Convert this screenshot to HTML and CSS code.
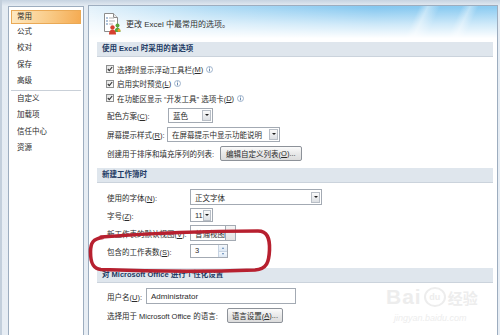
FILE: index.html
```html
<!DOCTYPE html>
<html lang="zh-CN">
<head>
  <meta charset="UTF-8">
  <meta name="viewport" content="width=device-width, initial-scale=1.0">
  <title>Excel 选项</title>
  <link rel="stylesheet" href="styles.css">
</head>
<body>
<div class="window">

  <!-- 左侧导航 -->
  <ul class="nav">
    <li class="nav-item active">常用</li>
    <li class="nav-item">公式</li>
    <li class="nav-item">校对</li>
    <li class="nav-item">保存</li>
    <li class="nav-item">高级</li>
    <li class="nav-sep"></li>
    <li class="nav-item">自定义</li>
    <li class="nav-item">加载项</li>
    <li class="nav-item">信任中心</li>
    <li class="nav-item">资源</li>
  </ul>

  <!-- 右侧内容 -->
  <div class="panel">
    <div class="banner">
      <svg class="banner-icon" width="20" height="23" viewBox="0 0 20 23">
        <path d="M2.5 1.5h9l4 4v14h-13z" fill="#fff" stroke="#8c8c8c"/>
        <path d="M11.5 1.5v4h4" fill="#ececec" stroke="#8c8c8c"/>
        <path d="M4 6h2M4 9h2M4 12h2" stroke="#5f86b6"/>
        <path d="M7 6h5M7 9h6M7 12h4" stroke="#b3b3b3"/>
        <circle cx="15.5" cy="13.5" r="2" fill="#5aa63a"/>
        <path d="M12.5 20c0-3 1.3-4.3 3-4.3s3 1.3 3 4.3z" fill="#5aa63a"/>
        <circle cx="10.5" cy="15.5" r="2.2" fill="#d6402e"/>
        <path d="M7 22.5c0-3.6 1.5-4.8 3.5-4.8s3.5 1.2 3.5 4.8z" fill="#d6402e"/>
        <circle cx="17" cy="18.5" r="1.4" fill="#f0a030"/>
      </svg>
      <span>更改 Excel 中最常用的选项。</span>
    </div>

    <div class="bar">使用 Excel 时采用的首选项</div>
    <div class="group prefs">
      <div class="row check-row">
        <span class="checkbox"><svg width="6" height="6" viewBox="0 0 6 6"><path d="M0.8 3l1.5 1.6L5.2 1" fill="none" stroke="#333" stroke-width="1.1"/></svg></span>
        选择时显示浮动工具栏(<u>M</u>)
        <svg class="info" width="7" height="7" viewBox="0 0 7 7"><circle cx="3.5" cy="3.5" r="3" fill="#fff" stroke="#8aa3c2" stroke-width="0.8"/><rect x="3.05" y="1.4" width="0.9" height="0.9" fill="#5c7fa8"/><rect x="3.05" y="2.8" width="0.9" height="2.6" fill="#5c7fa8"/></svg>
      </div>
      <div class="row check-row">
        <span class="checkbox"><svg width="6" height="6" viewBox="0 0 6 6"><path d="M0.8 3l1.5 1.6L5.2 1" fill="none" stroke="#333" stroke-width="1.1"/></svg></span>
        启用实时预览(<u>L</u>)
        <svg class="info" width="7" height="7" viewBox="0 0 7 7"><circle cx="3.5" cy="3.5" r="3" fill="#fff" stroke="#8aa3c2" stroke-width="0.8"/><rect x="3.05" y="1.4" width="0.9" height="0.9" fill="#5c7fa8"/><rect x="3.05" y="2.8" width="0.9" height="2.6" fill="#5c7fa8"/></svg>
      </div>
      <div class="row check-row">
        <span class="checkbox"><svg width="6" height="6" viewBox="0 0 6 6"><path d="M0.8 3l1.5 1.6L5.2 1" fill="none" stroke="#333" stroke-width="1.1"/></svg></span>
        在功能区显示 “开发工具” 选项卡(<u>D</u>)
        <svg class="info" width="7" height="7" viewBox="0 0 7 7"><circle cx="3.5" cy="3.5" r="3" fill="#fff" stroke="#8aa3c2" stroke-width="0.8"/><rect x="3.05" y="1.4" width="0.9" height="0.9" fill="#5c7fa8"/><rect x="3.05" y="2.8" width="0.9" height="2.6" fill="#5c7fa8"/></svg>
      </div>
      <div class="row">
        <span class="label label-s">配色方案(<u>C</u>):</span>
        <span class="select w-color"><span class="value">蓝色</span><span class="arrow"></span></span>
      </div>
      <div class="row">
        <span class="label label-s">屏幕提示样式(<u>R</u>):</span>
        <span class="select w-tip"><span class="value">在屏幕提示中显示功能说明</span><span class="arrow"></span></span>
      </div>
      <div class="row">
        <span>创建用于排序和填充序列的列表:</span>
        <span class="btn btn-list">编辑自定义列表(<u>O</u>)...</span>
      </div>
    </div>

    <div class="bar">新建工作簿时</div>
    <div class="group newbook">
      <div class="row">
        <span class="label label-m">使用的字体(<u>N</u>):</span>
        <span class="select w-font"><span class="value">正文字体</span><span class="arrow"></span></span>
      </div>
      <div class="row">
        <span class="label label-m">字号(<u>Z</u>):</span>
        <span class="select w-size"><span class="value">11</span><span class="arrow"></span></span>
      </div>
      <div class="row">
        <span class="label label-m">新工作表的默认视图(<u>V</u>):</span>
        <span class="select w-view"><span class="value">普通视图</span><span class="arrow blank"></span></span>
      </div>
      <div class="row">
        <span class="label label-m">包含的工作表数(<u>S</u>):</span>
        <span class="spin"><span class="value">3</span><span class="spinner"><span class="up"></span><span class="down"></span></span></span>
      </div>
    </div>

    <div class="bar">对 Microsoft Office 进行个性化设置</div>
    <div class="group personal">
      <div class="row">
        <span class="label label-u">用户名(<u>U</u>):</span>
        <span class="text-input">Administrator</span>
      </div>
      <div class="row">
        <span>选择用于 Microsoft Office 的语言:</span>
        <span class="btn btn-lang">语言设置(<u>A</u>)...</span>
      </div>
    </div>
  </div>

  <!-- 红色圈注 -->
  <svg class="mark" width="190" height="50" viewBox="85 226 190 50">
    <path d="M101 237 C140 234 200 231 258 231 C267 231 270 238 269.5 250 C269 262 267 269 255 270 C200 272 140 271 101 269.5 C93 269 90.5 263 90.5 252 C90.5 243 93 238.5 103 237.5" fill="none" stroke="#b7202f" stroke-width="3.6" stroke-linecap="round"/>
  </svg>

  <!-- 水印 -->
  <div class="watermark">
    <div class="wm-logo"><span class="wm-bai">Bai</span><span class="wm-du">du</span><span class="wm-jy">经验</span></div>
    <div class="wm-url">jingyan.baidu.com</div>
  </div>
</div>
</body>
</html>
```

FILE: styles.css
```css
body {
    margin: 0;
    font-family: "Liberation Sans", "Noto Sans CJK SC", sans-serif;
    font-size: 7.5px;
    color: #2b2b2b;
}

u {
    text-decoration: underline;
}

/* 窗口 */
.window {
    position: relative;
    display: flex;
    align-items: flex-start;
    width: 500px;
    height: 335px;
    overflow: hidden;
    background: linear-gradient(#c6d3e1, #e5ecf3 6px, #e7edf4);
    border-left: 2px solid #c3cfdc;
    box-sizing: border-box;
}

/* 左侧导航 */
.nav {
    list-style: none;
    margin: 6px 0 0 6px;
    padding: 0 2px;
    width: 76px;
    height: 329px;
    box-sizing: border-box;
    border: 1px solid #9dadbf;
    border-bottom: none;
    background: #fff;
}

.nav-item {
    height: 16.5px;
    line-height: 16.5px;
    padding-left: 6px;
    white-space: nowrap;
}

.nav-item.active {
    margin-top: 3px;
    height: 13.5px;
    line-height: 11.5px;
    padding-left: 5px;
    box-sizing: border-box;
    border: 1px solid #eaa955;
    background: linear-gradient(100deg, #fee9c2, #f9ca86 55%, #f5ab52);
}

.nav-sep {
    height: 1px;
    background: #c9d0d8;
}

/* 右侧内容 */
.panel {
    margin: 5px 0 0 4px;
    width: 410px;
    height: 330px;
    box-sizing: border-box;
    border: 1px solid #9dadbf;
    border-bottom: none;
    background: #fff;
}

.banner {
    display: flex;
    align-items: center;
    gap: 4px;
    height: 34px;
    padding-left: 13px;
    font-size: 8px;
    color: #333;
    background:
        linear-gradient(to bottom, rgba(255, 255, 255, 0) 5%, rgba(255, 255, 255, 0.6) 55%, #fff 95%),
        linear-gradient(115deg, transparent 78%, rgba(255, 255, 255, 0.45) 80%, transparent 83%, transparent 88%, rgba(255, 255, 255, 0.4) 90%, transparent 92%),
        linear-gradient(to right, #e4f2fb, #b2dcf5 30%, #86c8f0 70%, #8fcdf2);
}

.bar {
    margin: 2px 4px 0 8px;
    height: 15px;
    line-height: 14px;
    padding-left: 5px;
    box-sizing: border-box;
    background: #dfe6ed;
    border-bottom: 1px solid #cbd3dc;
    font-weight: bold;
    color: #1d3a63;
    white-space: nowrap;
}

.group {
    padding-left: 18px;
}

.prefs {
    padding-top: 5px;
    padding-bottom: 3.5px;
}

.newbook {
    padding-top: 5px;
    padding-bottom: 6px;
}

.newbook .row {
    height: 18px;
}

.personal {
    padding-top: 3.5px;
}

.row {
    display: flex;
    align-items: center;
    height: 19px;
    white-space: nowrap;
}

.check-row {
    height: 14.5px;
    margin-left: -1px;
}

.checkbox {
    display: flex;
    align-items: center;
    justify-content: center;
    width: 8px;
    height: 8px;
    margin-right: 3px;
    box-sizing: border-box;
    border: 1px solid #8e8f8f;
    background: linear-gradient(135deg, #e2e2e2, #fff);
}

.info {
    margin-left: 3px;
}

.label-s { width: 61px; }
.label-m { width: 83px; }
.label-u { width: 39px; }

/* 下拉框 */
.select {
    display: flex;
    align-items: center;
    height: 15px;
    box-sizing: border-box;
    border: 1px solid #a3aab3;
    background: #fff;
}

.select .value {
    flex: 1;
    padding-left: 4px;
}

.select .arrow {
    display: flex;
    align-items: center;
    justify-content: center;
    width: 9px;
    height: 11px;
    margin-right: 1px;
    box-sizing: border-box;
    border: 1px solid #b8bec6;
    background: linear-gradient(#fafafa, #dcdfe3);
}

.select .arrow::after {
    content: '';
    border-left: 2px solid transparent;
    border-right: 2px solid transparent;
    border-top: 2px solid #1e1e1e;
}

.select .arrow.blank {
    width: 11px;
    height: 100%;
    margin-right: 0;
    border: none;
    border-left: 1px solid #a3aab3;
    background: linear-gradient(#f4f4f4, #e4e4e4);
}

.select .arrow.blank::after {
    display: none;
}

.w-color { width: 45px; }
.w-tip { width: 113px; margin-left: -1px; }
.w-font { width: 132px; height: 16px; }
.w-size { width: 23px; height: 14px; }
.w-view { width: 46px; height: 16px; }

/* 数值框 */
.spin {
    display: flex;
    width: 38px;
    height: 14px;
    box-sizing: border-box;
    border: 1px solid #a3aab3;
    background: #fff;
}

.spin .value {
    flex: 1;
    padding-left: 4px;
    line-height: 12px;
}

.spinner {
    display: flex;
    flex-direction: column;
    width: 8px;
    border-left: 1px solid #c7d3e2;
}

.spinner span {
    flex: 1;
    display: flex;
    align-items: center;
    justify-content: center;
    background: linear-gradient(#f5f9fd, #dde8f4);
}

.spinner .up {
    border-bottom: 1px solid #c7d3e2;
}

.spinner .up::after {
    content: '';
    border-left: 1.5px solid transparent;
    border-right: 1.5px solid transparent;
    border-bottom: 2px solid #5b83b5;
}

.spinner .down::after {
    content: '';
    border-left: 1.5px solid transparent;
    border-right: 1.5px solid transparent;
    border-top: 2px solid #5b83b5;
}

/* 按钮和输入框 */
.btn {
    display: flex;
    align-items: center;
    height: 15px;
    padding: 0 6px;
    box-sizing: border-box;
    border: 1px solid #8d9299;
    border-radius: 2px;
    background: linear-gradient(#fbfbfb, #e9e9e9 50%, #dcdcdc);
}

.btn-list {
    margin-left: 6px;
    padding: 0 5px;
}

.btn-lang {
    margin-left: 9px;
    padding: 0 4px;
}

.text-input {
    display: flex;
    align-items: center;
    width: 150px;
    height: 16px;
    padding-left: 4px;
    box-sizing: border-box;
    border: 1px solid #a3aab3;
    background: #fff;
    font-size: 8px;
}

/* 红色圈注 */
.mark {
    position: absolute;
    left: 83px;
    top: 226px;
    pointer-events: none;
}

/* 水印 */
.watermark {
    position: absolute;
    left: 384px;
    top: 284px;
    color: #ededed;
    pointer-events: none;
}

.wm-logo {
    display: flex;
    align-items: center;
    height: 26px;
}

.wm-bai {
    font-size: 21px;
    font-weight: bold;
    letter-spacing: 1px;
}

.wm-du {
    display: flex;
    align-items: center;
    justify-content: center;
    width: 18px;
    height: 16px;
    margin: 0 2px;
    border: 2px solid #ededed;
    border-radius: 50%;
    font-size: 9px;
    font-weight: bold;
}

.wm-jy {
    font-size: 15px;
    font-weight: bold;
}

.wm-url {
    margin-top: 3px;
    padding-left: 8px;
    font-size: 9px;
    font-style: italic;
}
```
